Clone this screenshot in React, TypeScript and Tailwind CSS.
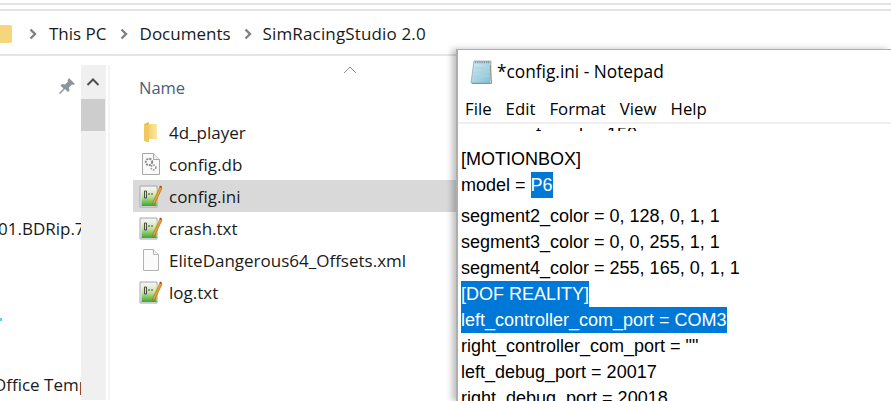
import React from 'react';

const ui = "font-['Open_Sans','Noto_Sans',sans-serif]";

const Chevron = () => (
  <svg width="8" height="12" viewBox="0 0 8 12" className="shrink-0">
    <path d="M1.5 1.5 6 6l-4.5 4.5" fill="none" stroke="#808080" strokeWidth="2.4" />
  </svg>
);

const FolderIcon = () => (
  <svg width="16" height="22" viewBox="0 0 16 22">
    <defs>
      <linearGradient id="fold" x1="0" x2="1" y1="0" y2="0">
        <stop offset="0" stopColor="#f3cf6b" />
        <stop offset="1" stopColor="#fbe7a5" />
      </linearGradient>
    </defs>
    <path d="M1 3 6 1v20l-5-1Z" fill="#e7b94f" />
    <path d="M5 3h9v15H5Z" fill="url(#fold)" />
    <path d="M1 3 6 5v16l-5-1Z" fill="#f0c862" />
  </svg>
);

const GearFileIcon = () => (
  <svg width="18" height="22" viewBox="0 0 18 22">
    <path d="M.5.5h11l6 6v15H.5Z" fill="#fafafa" stroke="#a8a8a8" />
    <path d="M11.5.5v6h6" fill="#eee" stroke="#a8a8a8" />
    <circle cx="7" cy="9" r="3.2" fill="none" stroke="#8a8a8a" strokeWidth="2" strokeDasharray="2 1" />
    <circle cx="11.5" cy="14.5" r="2.4" fill="none" stroke="#9a9a9a" strokeWidth="1.6" strokeDasharray="1.5 1" />
  </svg>
);

const BlankFileIcon = () => (
  <svg width="16" height="22" viewBox="0 0 16 22">
    <path d="M.5.5h10l5 5v16H.5Z" fill="#fbfbfb" stroke="#b4b4b4" />
    <path d="M10.5.5v5h5" fill="#f0f0f0" stroke="#b4b4b4" />
  </svg>
);

const IniIcon = () => (
  <svg width="24" height="24" viewBox="0 0 24 24">
    <defs>
      <linearGradient id="ini" x1="0" x2="0" y1="0" y2="1">
        <stop offset="0" stopColor="#eef5e4" />
        <stop offset="0.45" stopColor="#c2e09c" />
        <stop offset="1" stopColor="#38a82c" />
      </linearGradient>
    </defs>
    <path d="M1 2h17v21H1Z" fill="#f2f2f2" stroke="#a6a6a6" />
    <path d="M2.500 5h15v17h-15Z" fill="url(#ini)" />
    <path d="M5.500 7h2v7h-2Z" fill="none" stroke="#4a4a4a" />
    <path d="M9 10h2M12 10h2" stroke="#4a4a4a" strokeWidth="1.200" />
    <path d="m14 18 7-15 2 1-7 15-2.500 1.500Z" fill="#eda92a" stroke="#a96d12" strokeWidth="0.700" />
    <path d="m21 1.500 2 1-.7 1.500-2-1Z" fill="#c0392b" />
  </svg>
);

const NotepadIcon = () => (
  <svg width="24" height="24" viewBox="0 0 24 24">
    <defs>
      <linearGradient id="pad" x1="0" x2="1" y1="0" y2="1">
        <stop offset="0" stopColor="#d7ecf4" />
        <stop offset="1" stopColor="#7fbfd4" />
      </linearGradient>
    </defs>
    <path d="M5 1h17l-1 22H2Z" fill="url(#pad)" stroke="#8aa9b5" strokeWidth="0.800" />
    <path d="M5 8h16M4.600 12h16.200M4.200 16h16.400" stroke="#a9d2e0" />
    <path d="M21.500 5 22.500 23.500H3" fill="none" stroke="#9a8f78" />
    <path d="M6 2.200h15" stroke="#7c8f99" strokeWidth="2" strokeDasharray="1.200 1" />
  </svg>
);

const rows = [
  { name: '4d_player', icon: <FolderIcon /> },
  { name: 'config.db', icon: <GearFileIcon /> },
  { name: 'config.ini', icon: <IniIcon />, selected: true },
  { name: 'crash.txt', icon: <IniIcon /> },
  { name: 'EliteDangerous64_Offsets.xml', icon: <BlankFileIcon /> },
  { name: 'log.txt', icon: <IniIcon /> },
];

const Sel = ({ children }: { children: React.ReactNode }) => (
  <span className="inline-block h-[26px] bg-[#0078d7] text-white">{children}</span>
);

export default function App() {
  return (
    <div className={`relative w-[891px] h-[401px] overflow-hidden bg-white text-[#1a1a1a] ${ui}`}>
      <div className="h-[3px]" />
      <div className="h-[2px] bg-[#e3e3e3]" />
      <div className="h-[4px]" />
      <div className="h-[2px] bg-[#e3e3e3]" />

      {/* breadcrumb */}
      <div className="h-[45px] border-b-2 border-[#e5e5e5] flex items-center text-[17px] pt-[3px]">
        <div className="w-[12px] h-[18px] bg-[#f6d67a] rounded-r-[2px] shrink-0" />
        <div className="w-[17px] shrink-0" />
        <Chevron />
        <span className="ml-[12px]">This PC</span>
        <span className="ml-[13px]"><Chevron /></span>
        <span className="ml-[12px]">Documents</span>
        <span className="ml-[13px]"><Chevron /></span>
        <span className="ml-[11px] tracking-[0.15px]">SimRacingStudio 2.0</span>
      </div>

      <div className="flex h-[344px]">
        {/* nav pane */}
        <div className="w-[81px] shrink-0 overflow-hidden text-[17px]">
          <div className="h-[21px]" />
          <div className="flex justify-end pr-[5px]">
            <svg width="18" height="18" viewBox="0 0 18 18">
              <path d="M11 1l6 6-2 1-1-.5-3 3 .5 3-1.500 1.500-3-3L2 17l-1-1 4.500-4.500-3-3L4 7l3 .5 3-3-.5-1Z" fill="#8c949c" />
            </svg>
          </div>
          <div className="whitespace-nowrap ml-[-2px] mt-[121px]">01.BDRip.7z.001</div>
          <div className="w-[2px] h-[3px] bg-[#5fd0f5] mt-[76px]" />
          <div className="whitespace-nowrap ml-[-7px] mt-[51px]">Office Templates</div>
        </div>

        {/* scrollbar */}
        <div className="w-[25px] shrink-0 bg-[#f0f0f0] mt-[9px] pr-[1px]">
          <div className="h-[34px] flex items-center justify-center">
            <svg width="14" height="10" viewBox="0 0 14 10">
              <path d="M1.500 8 7 2.500 12.500 8" fill="none" stroke="#505050" strokeWidth="2" />
            </svg>
          </div>
          <div className="h-[32px] bg-[#cdcdcd]" />
        </div>
        <div className="w-[2px] shrink-0 bg-[#f5f5f5] ml-[2px] mt-[9px]" />

        {/* file list */}
        <div className="flex-1 min-w-0 pl-[23px]">
          <div className="h-[60px] flex items-start relative">
            <span className="text-[16.5px] text-[#4c607a] mt-[20px] ml-[6px]">Name</span>
            <svg width="14" height="8" viewBox="0 0 14 8" className="absolute left-[210px] top-[10px]">
              <path d="M1 7 7 1l6 6" fill="none" stroke="#8a8a8a" />
            </svg>
          </div>
          {rows.map((r) => (
            <div key={r.name} className={`h-[32px] flex items-center ${r.selected ? 'bg-[#d9d9d9]' : ''}`}>
              <div className="w-[36px] flex justify-center">{r.icon}</div>
              <span className="text-[17px] whitespace-nowrap pt-[2px]">{r.name}</span>
            </div>
          ))}
        </div>
      </div>

      {/* notepad window */}
      <div className="absolute left-[456px] top-[49px] w-[435px] h-[352px] bg-white border-l-2 border-t border-[#8c8c8c]/70 shadow-[-4px_0_6px_rgba(0,0,0,0.25)]">
        <div className="h-[43px] flex items-center pl-[11px] gap-[4px] text-[17.3px] text-black">
          <NotepadIcon />
          <span>*config.ini - Notepad</span>
        </div>
        <div className="h-[31px] border-b-2 border-[#f0f0f0] flex items-center text-[16.800px] text-black pl-[7px] gap-[14px] pt-[3px]">
          <span>File</span>
          <span>Edit</span>
          <span>Format</span>
          <span>View</span>
          <span>Help</span>
        </div>
        <div className="pl-[3px] text-[18px] leading-[26px] text-black font-['Liberation_Sans',Arial,sans-serif] whitespace-pre">
          <div className="h-[4px]" />
          <div className="h-[3px] overflow-hidden">
            <div className="mt-[-7px] pl-[75px]">t<span className="ml-[38px]">l</span><span className="ml-[24px]">150</span></div>
          </div>
          <div className="h-[15px]" />
          <div>[MOTIONBOX]</div>
          <div>model = <Sel>P6</Sel></div>
          <div className="h-[5px]" />
          <div>segment2_color = 0, 128, 0, 1, 1</div>
          <div>segment3_color = 0, 0, 255, 1, 1</div>
          <div>segment4_color = 255, 165, 0, 1, 1</div>
          <div><Sel>[DOF REALITY]</Sel></div>
          <div><Sel>left_controller_com_port = COM3</Sel></div>
          <div>right_controller_com_port = ""</div>
          <div>left_debug_port = 20017</div>
          <div>right_debug_port = 20018</div>
        </div>
      </div>
    </div>
  );
}
